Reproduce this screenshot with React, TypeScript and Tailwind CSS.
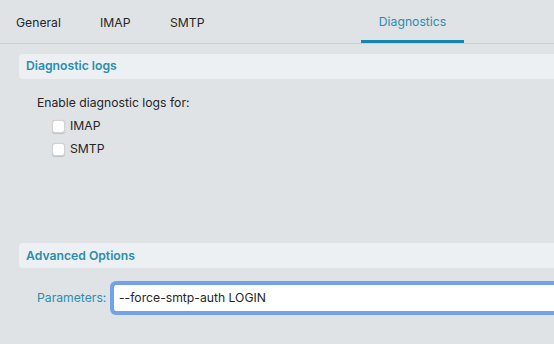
export default function App() {
  const tabs = [
    { label: 'General', w: 'w-[84px]' },
    { label: 'IMAP', w: 'w-[70px]' },
    { label: 'SMTP', w: 'w-[191px]' },
  ]
  return (
    <div className="w-[554px] h-[344px] overflow-hidden bg-[#dfe3e6] text-[12.2px] text-[#262626] font-['Inter',sans-serif]">
      {/* tab strip */}
      <div className="h-[44px] flex items-stretch border-b border-[#c9cdd1] pl-[16px]">
        {tabs.map(t => (
          <div key={t.label} className={`${t.w} flex items-center pt-[3px]`}>{t.label}</div>
        ))}
        <div className="w-[103px] flex flex-col">
          <div className="flex-1 flex items-center justify-center text-[#2a8db0] pt-[5px]">Diagnostics</div>
          <div className="h-[3px] bg-[#1786ad]" />
        </div>
      </div>

      <div className="pl-[19px]">
        <div className="mt-[10px] h-[25px] rounded-l-[4px] bg-[#ecf0f3] flex items-center pl-[7px] font-semibold text-[#2a8db0]">
          Diagnostic logs
        </div>
        <div className="mt-[15px] pl-[18px]">Enable diagnostic logs for:</div>
        <div className="pl-[33px] mt-[7px] flex flex-col gap-[9px]">
          {['IMAP', 'SMTP'].map(l => (
            <label key={l} className="flex items-center gap-[5px] h-[14px]">
              <span className="w-[13px] h-[13px] rounded-[3px] bg-white border border-[#cfd3d6] shadow-[0_0.5px_1px_rgba(0,0,0,0.15)]" />
              <span>{l}</span>
            </label>
          ))}
        </div>

        <div className="mt-[87px] h-[25px] rounded-l-[4px] bg-[#ecf0f3] flex items-center pl-[7px] font-semibold text-[#2a8db0]">
          Advanced Options
        </div>
        <div className="mt-[13px] flex items-center">
          <span className="ml-[18px] w-[73px] text-[#2a8db0]">Parameters:</span>
          <div className="h-[34px] flex-1 rounded-l-[6px] border-[4px] border-r-0 border-[#72a2ea] bg-white flex items-center pl-[5px]">
            --force-smtp-auth LOGIN
          </div>
        </div>
      </div>
    </div>
  )
}
